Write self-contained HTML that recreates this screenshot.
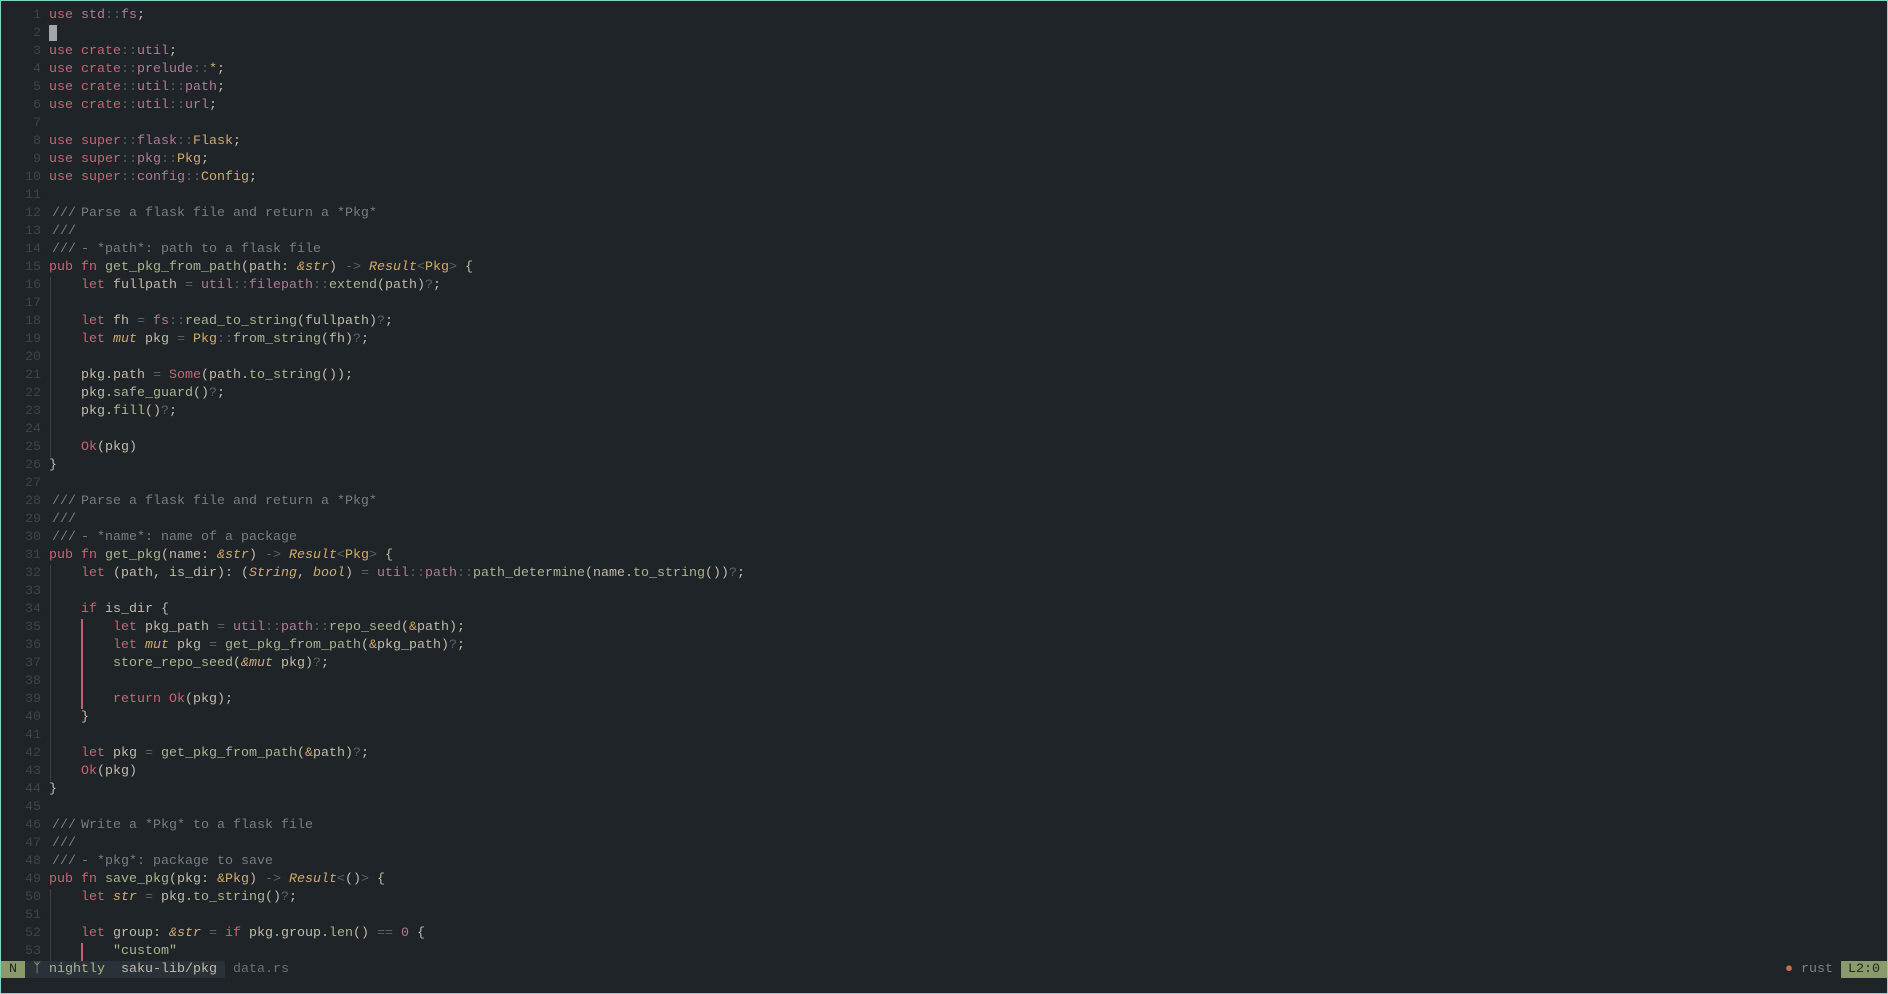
<!DOCTYPE html>
<html><head><meta charset="utf-8"><style>
html,body{margin:0;padding:0;}
body{width:1888px;height:994px;background:#1f2428;box-sizing:border-box;border:1px solid #7fd3c4;position:relative;overflow:hidden;font-family:"Liberation Mono",monospace;font-size:13.33px;color:#c2bca6;}
.ln{position:absolute;left:0;width:40px;text-align:right;color:#3e444a;}
.code{position:absolute;left:48px;white-space:pre;}
.row{position:absolute;height:18px;line-height:18px;}
.k{color:#cc6370}.n{color:#b57898}.f{color:#a9b68b}.t{color:#d4aa6a}.i{color:#d4aa6a;font-style:italic}.c{color:#7a7d80}.p{color:#5c6268}.num{color:#b57898}
.s3{display:inline-block;width:32px;padding-left:3px;box-sizing:border-box}
.g{position:absolute;width:1px;background:#3a4046}
.r{position:absolute;width:2px;background:#c4606a}
</style></head><body>
<div id="c"></div>
<div class="g" style="left:49px;top:276px;height:180px"></div>
<div class="g" style="left:49px;top:564px;height:216px"></div>
<div class="g" style="left:49px;top:888px;height:72px"></div>
<div class="r" style="left:80px;top:618px;height:90px"></div>
<div class="r" style="left:80px;top:942px;height:18px"></div>
<div style="position:absolute;left:48px;top:24px;width:8px;height:16px;background:#a3a7aa"></div>
<div style="position:absolute;left:0;top:960px;width:24px;height:17px;background:#8a9a6a;color:#1f2428;line-height:17px;text-align:center">N</div>
<div style="position:absolute;left:24px;top:960px;width:200px;height:17px;background:#2a3138;line-height:17px;white-space:pre"><span style="color:#a9b68b"> ᛉ nightly</span>  <span style="color:#c2bca6">saku-lib/pkg</span></div>
<div style="position:absolute;left:232px;top:960px;line-height:17px;color:#6a7075">data.rs</div>
<div style="position:absolute;left:1784px;top:960px;line-height:17px;color:#7f8183;white-space:pre"><span style="color:#c0704a">●</span> rust</div>
<div style="position:absolute;left:1840px;top:960px;width:46px;height:17px;background:#8a9a6a;color:#1f2428;line-height:17px;text-align:center">L2:0</div>
<script>
const C=s=>'<span class="c"><span class="s3">///</span>'+s+'</span>';
const L=[
'<span class="k">use</span> <span class="n">std</span><span class="p">::</span><span class="n">fs</span>;',
'',
'<span class="k">use</span> <span class="k">crate</span><span class="p">::</span><span class="n">util</span>;',
'<span class="k">use</span> <span class="k">crate</span><span class="p">::</span><span class="n">prelude</span><span class="p">::</span><span class="t">*</span>;',
'<span class="k">use</span> <span class="k">crate</span><span class="p">::</span><span class="n">util</span><span class="p">::</span><span class="n">path</span>;',
'<span class="k">use</span> <span class="k">crate</span><span class="p">::</span><span class="n">util</span><span class="p">::</span><span class="n">url</span>;',
'',
'<span class="k">use</span> <span class="k">super</span><span class="p">::</span><span class="n">flask</span><span class="p">::</span><span class="t">Flask</span>;',
'<span class="k">use</span> <span class="k">super</span><span class="p">::</span><span class="n">pkg</span><span class="p">::</span><span class="t">Pkg</span>;',
'<span class="k">use</span> <span class="k">super</span><span class="p">::</span><span class="n">config</span><span class="p">::</span><span class="t">Config</span>;',
'',
C('Parse a flask file and return a *Pkg*'),
C(''),
C('- *path*: path to a flask file'),
'<span class="k">pub</span> <span class="k">fn</span> <span class="f">get_pkg_from_path</span>(path: <span class="i">&amp;str</span>) <span class="p">-&gt;</span> <span class="i">Result</span><span class="p">&lt;</span><span class="t">Pkg</span><span class="p">&gt;</span> {',
'    <span class="k">let</span> fullpath <span class="p">=</span> <span class="n">util</span><span class="p">::</span><span class="n">filepath</span><span class="p">::</span><span class="f">extend</span>(path)<span class="p">?</span>;',
'',
'    <span class="k">let</span> fh <span class="p">=</span> <span class="n">fs</span><span class="p">::</span><span class="f">read_to_string</span>(fullpath)<span class="p">?</span>;',
'    <span class="k">let</span> <span class="i">mut</span> pkg <span class="p">=</span> <span class="t">Pkg</span><span class="p">::</span><span class="f">from_string</span>(fh)<span class="p">?</span>;',
'',
'    pkg.path <span class="p">=</span> <span class="k">Some</span>(path.<span class="f">to_string</span>());',
'    pkg.<span class="f">safe_guard</span>()<span class="p">?</span>;',
'    pkg.<span class="f">fill</span>()<span class="p">?</span>;',
'',
'    <span class="k">Ok</span>(pkg)',
'}',
'',
C('Parse a flask file and return a *Pkg*'),
C(''),
C('- *name*: name of a package'),
'<span class="k">pub</span> <span class="k">fn</span> <span class="f">get_pkg</span>(name: <span class="i">&amp;str</span>) <span class="p">-&gt;</span> <span class="i">Result</span><span class="p">&lt;</span><span class="t">Pkg</span><span class="p">&gt;</span> {',
'    <span class="k">let</span> (path, is_dir): (<span class="i">String</span>, <span class="i">bool</span>) <span class="p">=</span> <span class="n">util</span><span class="p">::</span><span class="n">path</span><span class="p">::</span><span class="f">path_determine</span>(name.<span class="f">to_string</span>())<span class="p">?</span>;',
'',
'    <span class="k">if</span> is_dir {',
'        <span class="k">let</span> pkg_path <span class="p">=</span> <span class="n">util</span><span class="p">::</span><span class="n">path</span><span class="p">::</span><span class="f">repo_seed</span>(<span class="t">&amp;</span>path);',
'        <span class="k">let</span> <span class="i">mut</span> pkg <span class="p">=</span> <span class="f">get_pkg_from_path</span>(<span class="t">&amp;</span>pkg_path)<span class="p">?</span>;',
'        <span class="f">store_repo_seed</span>(<span class="i">&amp;mut</span> pkg)<span class="p">?</span>;',
'',
'        <span class="k">return</span> <span class="k">Ok</span>(pkg);',
'    }',
'',
'    <span class="k">let</span> pkg <span class="p">=</span> <span class="f">get_pkg_from_path</span>(<span class="t">&amp;</span>path)<span class="p">?</span>;',
'    <span class="k">Ok</span>(pkg)',
'}',
'',
C('Write a *Pkg* to a flask file'),
C(''),
C('- *pkg*: package to save'),
'<span class="k">pub</span> <span class="k">fn</span> <span class="f">save_pkg</span>(pkg: <span class="t">&amp;Pkg</span>) <span class="p">-&gt;</span> <span class="i">Result</span><span class="p">&lt;</span>()<span class="p">&gt;</span> {',
'    <span class="k">let</span> <span class="i">str</span> <span class="p">=</span> pkg.<span class="f">to_string</span>()<span class="p">?</span>;',
'',
'    <span class="k">let</span> group: <span class="i">&amp;str</span> <span class="p">=</span> <span class="k">if</span> pkg.group.<span class="f">len</span>() <span class="p">==</span> <span class="num">0</span> {',
'        <span class="f">"custom"</span>'
];
let h='';
L.forEach((s,i)=>{const top=6+18*i;h+=`<div class="row ln" style="top:${top}px">${i+1}</div><div class="row code" style="top:${top}px">${s}</div>`;});
document.getElementById('c').innerHTML=h;
</script>
</body></html>
